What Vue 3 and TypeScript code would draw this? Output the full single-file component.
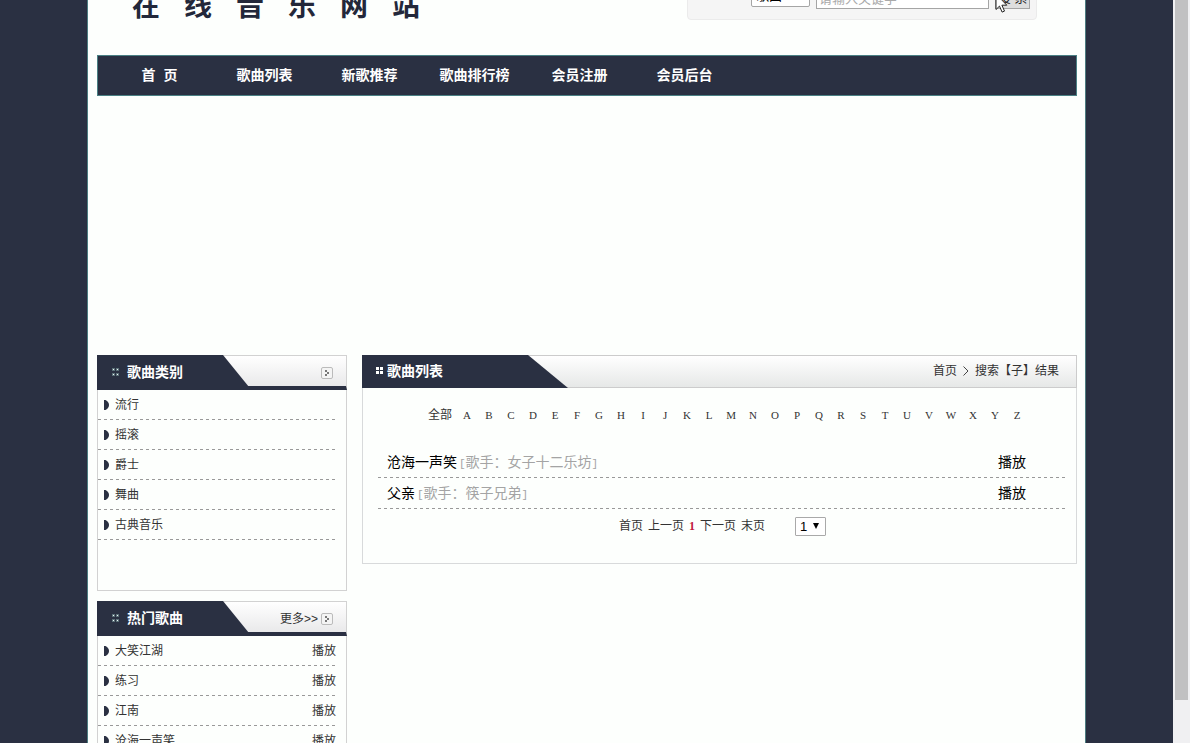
<script setup lang="ts">
import { ref } from 'vue'

interface Song {
  name: string
  singer: string
}

const logo: string[] = ['在', '线', '音', '乐', '网', '站']
const nav: string[] = ['首\u00a0\u00a0页', '歌曲列表', '新歌推荐', '歌曲排行榜', '会员注册', '会员后台']
const categories: string[] = ['流行', '摇滚', '爵士', '舞曲', '古典音乐']
const hot: string[] = ['大笑江湖', '练习', '江南', '沧海一声笑']
const letters: string[] = 'ABCDEFGHIJKLMNOPQRSTUVWXYZ'.split('')
const songs: Song[] = [
  { name: '沧海一声笑', singer: '女子十二乐坊' },
  { name: '父亲', singer: '筷子兄弟' },
]
const keyword = ref('')
</script>

<template>
  <div class="screen">
    <div class="backdrop">
      <div class="page">
        <header class="top">
          <h1 class="logo"><span v-for="c in logo" :key="c">{{ c }}</span></h1>
          <form class="search" @submit.prevent>
            <select class="kind" aria-label="搜索类型"><option>歌曲</option></select>
            <input v-model="keyword" class="keyword" type="text" placeholder="请输入关键字" aria-label="关键字" />
            <span class="go-wrap">
              <button class="go" type="submit">搜 索</button>
              <svg class="pointer" width="13" height="20" viewBox="0 0 13 20" aria-hidden="true">
                <path d="M1 1v15.500l3.500-3.400 2.600 6 2.400-1-2.600-5.900h4.900z" fill="#fff" stroke="#222" stroke-width="1" />
              </svg>
            </span>
          </form>
        </header>

        <nav class="nav">
          <a v-for="n in nav" :key="n" href="#">{{ n }}</a>
        </nav>

        <div class="columns">
          <aside class="side">
            <section class="box categories">
              <div class="box-head">
                <h2>
                  <svg width="7" height="8" viewBox="0 0 7 8" aria-hidden="true"><path d="M0 0h3v3H0zM4 0h3v3H4zM0 5h3v3H0zM4 5h3v3H4z" fill="#5b7078" /><path d="M1 1h1v1H1zM5 1h1v1H5zM1 6h1v1H1zM5 6h1v1H5z" fill="#eef5f5" /></svg>
                  歌曲类别
                </h2>
                <a class="more" href="#" aria-label="更多">
                  <svg width="12" height="12" viewBox="0 0 12 12" aria-hidden="true"><rect x=".5" y=".5" width="11" height="11" rx="1.500" fill="#f4f4f4" stroke="#bbb" /><path d="M4 3h2v2H4zM6 5h2v2H6zM4 7h2v2H4z" fill="#777" /></svg>
                </a>
              </div>
              <ul>
                <li v-for="c in categories" :key="c">
                  <svg width="5" height="10" viewBox="0 0 5 10" aria-hidden="true"><path d="M0 0h1.500Q5 2 5 5T1.500 10H0z" fill="#2a3042" /></svg>
                  <a href="#">{{ c }}</a>
                </li>
              </ul>
            </section>

            <section class="box">
              <div class="box-head">
                <h2>
                  <svg width="7" height="8" viewBox="0 0 7 8" aria-hidden="true"><path d="M0 0h3v3H0zM4 0h3v3H4zM0 5h3v3H0zM4 5h3v3H4z" fill="#5b7078" /><path d="M1 1h1v1H1zM5 1h1v1H5zM1 6h1v1H1zM5 6h1v1H5z" fill="#eef5f5" /></svg>
                  热门歌曲
                </h2>
                <a class="more" href="#">
                  更多&gt;&gt;
                  <svg width="12" height="12" viewBox="0 0 12 12" aria-hidden="true"><rect x=".5" y=".5" width="11" height="11" rx="1.500" fill="#f4f4f4" stroke="#bbb" /><path d="M4 3h2v2H4zM6 5h2v2H6zM4 7h2v2H4z" fill="#777" /></svg>
                </a>
              </div>
              <ul>
                <li v-for="h in hot" :key="h">
                  <svg width="5" height="10" viewBox="0 0 5 10" aria-hidden="true"><path d="M0 0h1.500Q5 2 5 5T1.500 10H0z" fill="#2a3042" /></svg>
                  <a href="#">{{ h }}</a>
                  <a class="play" href="#">播放</a>
                </li>
              </ul>
            </section>
          </aside>

          <main class="list">
            <div class="list-head">
              <h2>
                <svg width="7" height="7" viewBox="0 0 7 7" aria-hidden="true"><path d="M0 0h3v3H0zM4 0h3v3H4zM0 4h3v3H0zM4 4h3v3H4z" fill="#fff" /></svg>
                歌曲列表
              </h2>
              <div class="crumbs">
                <a href="#">首页</a>
                <svg width="6" height="10" viewBox="0 0 6 10" aria-hidden="true"><path d="M.5.5 5 5 .5 9.500" fill="none" stroke="#444" /></svg>
                <span>搜索【子】结果</span>
              </div>
            </div>
            <div class="letters">
              <a class="all" href="#">全部</a>
              <a v-for="l in letters" :key="l" class="letter" href="#">{{ l }}</a>
            </div>
            <ul class="songs">
              <li v-for="s in songs" :key="s.name">
                <a href="#">{{ s.name }}</a>
                <span class="singer"><i>[</i>歌手：{{ s.singer }}<i>]</i></span>
                <a class="play" href="#">播放</a>
              </li>
            </ul>
            <div class="pager">
              <a href="#">首页</a>
              <a href="#">上一页</a>
              <b>1</b>
              <a href="#">下一页</a>
              <a href="#">末页</a>
              <span class="jump">
                <select aria-label="页码"><option>1</option></select>
                <svg width="6" height="6" viewBox="0 0 6 6" aria-hidden="true"><path d="M0 0h6L3 6z" fill="#000" /></svg>
              </span>
            </div>
          </main>
        </div>
      </div>
    </div>
    <div class="scroll" aria-hidden="true"><div class="thumb"></div></div>
  </div>
</template>

<style>
body {
  margin: 0;
}
</style>

<style scoped>
* {
  box-sizing: border-box;
}
.screen {
  display: flex;
  height: 100vh;
  overflow: hidden;
  font: 12px/20px "Liberation Sans", "Noto Sans CJK SC", sans-serif;
  color: #333;
}
.backdrop {
  flex: 1;
  background: #2a3042;
}
.page {
  max-width: 999px;
  height: 100%;
  margin: 0 auto;
  padding: 0 8px 0 9px;
  background: #fdfffd;
  border: solid #4c7c80;
  border-width: 0 1px;
  overflow: hidden;
}
a {
  color: inherit;
  text-decoration: none;
}
h1,
h2,
ul {
  margin: 0;
  padding: 0;
  list-style: none;
}
svg {
  display: block;
  flex: none;
}

.top {
  display: flex;
  justify-content: space-between;
  align-items: flex-end;
  height: 55px;
  padding: 0 40px 35px 35px;
}
.logo {
  display: flex;
  gap: 24px;
  font: 700 28px/32px "Noto Sans CJK SC", sans-serif;
  color: #23283a;
}
.search {
  display: flex;
  align-items: flex-end;
  width: 350px;
  height: 50px;
  padding: 0 6px 10px 63px;
  background: #f5f5f5;
  border: 1px solid #ebebeb;
  border-radius: 4px;
}
.kind,
.keyword,
.go {
  height: 22px;
  padding: 0 3px;
  font: 13px/18px "Liberation Sans", "Noto Sans CJK SC", sans-serif;
  border: 1px solid #a5a5a5;
  border-radius: 0;
}
.kind {
  width: 59px;
  margin: 0 6px 2px 0;
  padding: 0 4px;
  background: #fff;
  border-radius: 2px;
  appearance: none;
}
.keyword {
  flex: 1;
  min-width: 0;
  margin-right: 6px;
  padding: 0 2px;
  background: #fff;
}
.keyword::placeholder {
  color: #a9a9a9;
}
.go-wrap {
  position: relative;
}
.go {
  display: block;
  width: 35px;
  padding: 0;
  background: #dedede;
  color: #222;
}
.pointer {
  position: absolute;
  left: 0;
  bottom: -4px;
}

.nav {
  display: flex;
  height: 41px;
  padding-left: 9px;
  background: #2a3042;
  border: 1px solid #4a8084;
}
.nav a {
  width: 105px;
  font-size: 14px;
  font-weight: bold;
  line-height: 39px;
  text-align: center;
  color: #fff;
}

.columns {
  display: flex;
  align-items: flex-start;
  gap: 15px;
  margin-top: 259px;
}
.side {
  display: flex;
  flex-direction: column;
  gap: 10px;
  width: 250px;
}
.box {
  border: 1px solid #d2d2d2;
  border-top: 0;
}
.categories {
  padding-bottom: 50px;
}
.box-head {
  display: flex;
  justify-content: space-between;
  height: 35px;
  margin: 0 -1px;
  background: linear-gradient(#fff, #e9e9ea);
  border: 1px solid #d2d2d2;
  border-bottom: 4px solid #2a3042;
}
h2 {
  display: flex;
  align-items: center;
  padding-bottom: 2px;
  background: #2a3042;
  font-size: 14px;
  color: #fff;
}
.box-head h2 {
  gap: 8px;
  width: 153px;
  height: 35px;
  margin: -1px 0 0 -1px;
  padding-left: 15px;
  clip-path: polygon(0 0, 126px 0, 152px 32px, 152px 100%, 0 100%);
}
.more {
  display: flex;
  align-items: center;
  gap: 3px;
  height: 33px;
  padding-right: 13px;
}
.box li {
  display: flex;
  align-items: center;
  gap: 6px;
  height: 30px;
  margin-right: 10px;
  padding-left: 6px;
  background: repeating-linear-gradient(90deg, #999 0 3px, transparent 3px 6px) bottom / 100% 1px no-repeat;
}
.play {
  margin-left: auto;
}

.list {
  flex: 1;
  min-width: 0;
  padding-bottom: 27px;
  border: 1px solid #d8dadb;
  border-top: 0;
}
.list-head {
  display: flex;
  justify-content: space-between;
  align-items: center;
  height: 33px;
  margin: 0 -1px;
  background: linear-gradient(#fff, #e6e8e7);
  border: 1px solid #ccc;
}
.list-head h2 {
  gap: 4px;
  width: 206px;
  height: 33px;
  margin-left: -1px;
  padding-left: 14px;
  clip-path: polygon(0 0, 166px 0, 100% 100%, 0 100%);
}
.crumbs {
  display: flex;
  align-items: center;
  gap: 6px;
  padding: 0 17px 2px 0;
}
.letters {
  display: flex;
  gap: 8px;
  margin-top: 17px;
  padding-left: 65px;
}
.letter {
  width: 14px;
  font-family: "Liberation Serif", serif;
  font-size: 11px;
  text-align: center;
}
.songs {
  margin: 22px 8px 0 15px;
  font-size: 14px;
}
.songs li {
  display: flex;
  align-items: center;
  gap: 2px;
  height: 31px;
  padding: 0 42px 2px 9px;
  color: #000;
  background: repeating-linear-gradient(90deg, #999 0 3px, transparent 3px 6px) bottom / 100% 1px no-repeat;
}
.singer {
  color: #a4a4a4;
}
.singer i {
  font: 11px "Liberation Mono", monospace;
}
.pager {
  display: flex;
  align-items: center;
  gap: 5px;
  margin-top: 7px;
  padding-left: 256px;
}
.pager b {
  font-family: "Liberation Serif", serif;
  color: #c01840;
}
.jump {
  display: flex;
  align-items: center;
  position: relative;
  margin-left: 25px;
}
.jump select {
  width: 31px;
  height: 19px;
  padding: 0 4px;
  font: 13px/17px "Liberation Sans", sans-serif;
  color: #000;
  background: #fff;
  border: 1px solid #a9a9a9;
  border-radius: 1px;
  appearance: none;
}
.jump svg {
  position: absolute;
  right: 7px;
  pointer-events: none;
}

.scroll {
  width: 17px;
  padding: 0 2px;
  background: #f0f0f2;
}
.thumb {
  height: 700px;
  background: #c1c1c2;
}
</style>
